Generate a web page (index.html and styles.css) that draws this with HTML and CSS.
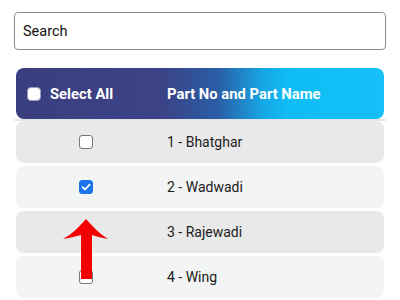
FILE: index.html
```html
<!DOCTYPE html>
<html>
<head>
<meta charset="utf-8">
<link rel="stylesheet" href="styles.css">
</head>
<body>
<div class="page">
  <div class="search">Search</div>
  <div class="table">
    <div class="head">
      <div class="head-sel"><span class="cb cb-head"></span><span>Select All</span></div>
      <div class="head-name">Part No and Part Name</div>
    </div>
    <div class="divider"></div>
    <div class="rows">
      <div class="row dark"><div class="cell-cb"><span class="cb"></span></div><div class="cell-name">1 - Bhatghar</div></div>
      <div class="row light"><div class="cell-cb"><span class="cb checked"><svg viewBox="0 0 14 14" width="14" height="14"><path d="M3.6 7.2 L6 9.5 L10.6 4.6" fill="none" stroke="#fff" stroke-width="1.8" stroke-linecap="round" stroke-linejoin="round"/></svg></span></div><div class="cell-name">2 - Wadwadi</div></div>
      <div class="row dark"><div class="cell-cb"></div><div class="cell-name">3 - Rajewadi</div></div>
      <div class="row light"><div class="cell-cb"><span class="cb"></span></div><div class="cell-name">4 - Wing</div></div>
    </div>
  </div>
  <svg class="arrow" viewBox="58 214 56 70" width="56" height="70">
    <defs><filter id="soft" x="-20%" y="-20%" width="140%" height="140%"><feGaussianBlur stdDeviation="0.6"/></filter></defs>
    <path filter="url(#soft)" fill="#f40000" d="M86 219 C 93 227, 100 234, 108 239 C 101 238, 96 236, 92 235 L 92 279 L 81 279 L 81 235 C 76 236, 71 238, 63 239 C 72 234, 79 227, 86 219 Z"/>
  </svg>
</div>
</body>
</html>
```

FILE: styles.css
```css
* { box-sizing: border-box; }
html, body { margin: 0; padding: 0; background: #fff; }
body { font-family: Roboto, "Liberation Sans", sans-serif; width: 400px; height: 300px; overflow: hidden; }
.page { position: relative; padding: 12px 14px 0; }
.search {
  height: 38px;
  border: 1px solid #8a8a8a;
  border-radius: 4px;
  padding: 0 8px;
  display: flex;
  align-items: center;
  font-size: 14.5px;
  color: #111;
}
.table { margin-top: 18px; }
.head {
  margin: 0 2px;
  height: 51px;
  border-radius: 8px;
  background: linear-gradient(90deg, #3a3e80 0%, #3b4386 40%, #2a5ea6 55%, #16a6e4 67%, #10bcf5 74%, #14c0f7 100%);
  display: grid;
  grid-template-columns: 151px 1fr;
  align-items: center;
  color: #fff;
  font-weight: 700;
  font-size: 14.8px;
}
.head-sel { display: flex; align-items: center; gap: 9px; padding-left: 11px; }
.cb {
  display: inline-block;
  width: 14px;
  height: 14px;
  border: 1.5px solid #777;
  border-radius: 3px;
  background: #fff;
}
.cb-head { border-color: #9aa0c0; border-radius: 4px; }
.cb.checked { background: #1a73e8; border-color: #1a73e8; position: relative; }
.cb.checked svg { position: absolute; left: -1.5px; top: -1.5px; }
.divider { height: 2px; background: #e4e4e4; }
.rows { display: flex; flex-direction: column; gap: 3px; }
.row {
  margin: 0 2px;
  height: 42px;
  border-radius: 8px;
  display: grid;
  grid-template-columns: 151px 1fr;
  align-items: center;
  font-size: 14px;
  color: #202020;
}
.row.dark { background: #e9e9e9; }
.row.light { background: #f3f4f4; }
.cell-cb { padding-left: 63px; display: flex; align-items: center; }
.arrow { position: absolute; left: 58px; top: 214px; }
```
